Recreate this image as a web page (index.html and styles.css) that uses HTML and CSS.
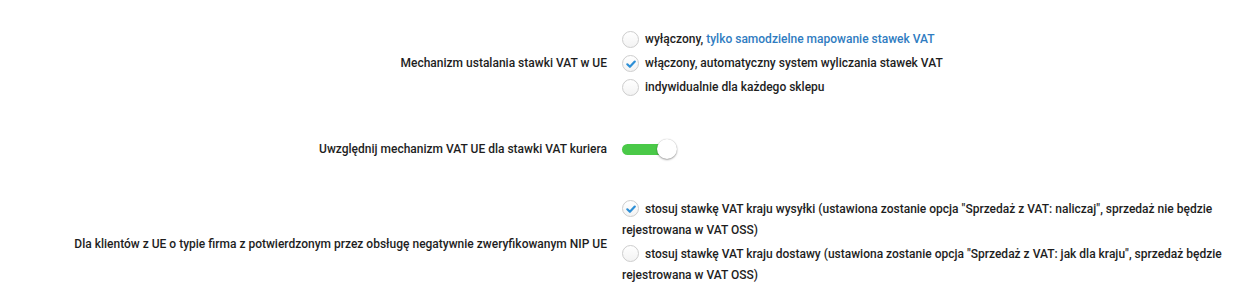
FILE: index.html
```html
<!DOCTYPE html>
<html lang="pl">
<head>
<meta charset="utf-8">
<title>VAT UE</title>
<link rel="stylesheet" href="styles.css">
</head>
<body>
<div class="form">
  <div class="row">
    <div class="label">Mechanizm ustalania stawki VAT w UE</div>
    <div class="controls">
      <label class="opt"><span class="radio"></span>wyłączony, <a class="link" href="#">tylko samodzielne mapowanie stawek VAT</a></label>
      <label class="opt"><span class="radio checked"><svg viewBox="0 0 16 16" width="16" height="16"><path d="M4.3 8.3 L6.9 10.8 L11.8 5.6" fill="none" stroke="#2d8fd6" stroke-width="2.2" stroke-linecap="round" stroke-linejoin="round"/></svg></span>włączony, automatyczny system wyliczania stawek VAT</label>
      <label class="opt"><span class="radio"></span>indywidualnie dla każdego sklepu</label>
    </div>
  </div>
  <div class="row">
    <div class="label">Uwzględnij mechanizm VAT UE dla stawki VAT kuriera</div>
    <div class="controls">
      <span class="toggle"><span class="track"></span><span class="knob"></span></span>
    </div>
  </div>
  <div class="row">
    <div class="label">Dla klientów z UE o typie firma z potwierdzonym przez obsługę negatywnie zweryfikowanym NIP UE</div>
    <div class="controls wide">
      <label class="opt multi"><span class="radio checked"><svg viewBox="0 0 16 16" width="16" height="16"><path d="M4.3 8.3 L6.9 10.8 L11.8 5.6" fill="none" stroke="#2d8fd6" stroke-width="2.2" stroke-linecap="round" stroke-linejoin="round"/></svg></span>stosuj stawkę VAT kraju wysyłki (ustawiona zostanie opcja "Sprzedaż z VAT: naliczaj", sprzedaż nie będzie rejestrowana w VAT OSS)</label>
      <label class="opt multi"><span class="radio"></span>stosuj stawkę VAT kraju dostawy (ustawiona zostanie opcja "Sprzedaż z VAT: jak dla kraju", sprzedaż będzie rejestrowana w VAT OSS)</label>
    </div>
  </div>
</div>
</body>
</html>
```

FILE: styles.css
```css
html, body {
  margin: 0;
  padding: 0;
  background: #fff;
}
body {
  font-family: Roboto, "Liberation Sans", Arial, sans-serif;
  font-size: 12px;
  font-weight: 500;
  color: #1e1e1e;
}
.form {
  padding: 27px 16px 0 0;
  display: flex;
  flex-direction: column;
  gap: 38px;
}
.row {
  display: grid;
  grid-template-columns: 607px 1fr;
  column-gap: 15px;
  align-items: center;
}
.label {
  text-align: right;
}
.controls {
  display: flex;
  flex-direction: column;
}
.opt {
  display: flex;
  align-items: center;
  height: 20px;
  padding: 2px 0;
  white-space: nowrap;
}
.opt.multi {
  display: block;
  height: auto;
  padding: 0;
  white-space: normal;
  line-height: 21px;
  margin-bottom: 3px;
}
.link {
  color: #2f7cc1;
  text-decoration: none;
  margin-left: 3px;
}
.radio {
  display: inline-block;
  box-sizing: border-box;
  width: 17px;
  height: 17px;
  border: 1px solid #cdcdcd;
  border-radius: 50%;
  background: linear-gradient(#ffffff, #f3f3f3);
  margin-right: 6px;
  flex: none;
  vertical-align: -4px;
  position: relative;
}
.radio svg {
  position: absolute;
  left: 0;
  top: 0;
}
.toggle {
  position: relative;
  display: inline-block;
  width: 57px;
  height: 24px;
}
.track {
  position: absolute;
  left: 0;
  top: 7px;
  width: 50px;
  height: 11px;
  border-radius: 6px;
  background: #4ac948;
}
.knob {
  position: absolute;
  left: 35px;
  top: 2px;
  width: 20px;
  height: 20px;
  border-radius: 50%;
  background: #fff;
  box-shadow: 0 1px 2px rgba(0,0,0,0.35), 0 0 1px rgba(0,0,0,0.25);
}
```
